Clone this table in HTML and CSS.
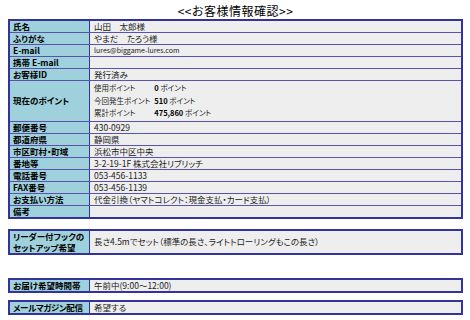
FILE: index.html
```html
<!DOCTYPE html>
<html lang="ja">
<head>
<meta charset="utf-8">
<title>お客様情報確認</title>
<link rel="stylesheet" href="styles.css">
</head>
<body>
<h1 class="title">&lt;&lt;お客様情報確認&gt;&gt;</h1>
<table class="info">
  <tr><th>氏名</th><td>山田　太郎様</td></tr>
  <tr><th>ふりがな</th><td>やまだ　たろう様</td></tr>
  <tr><th>E-mail</th><td class="small">lures@biggame-lures.com</td></tr>
  <tr><th>携帯 E-mail</th><td></td></tr>
  <tr><th>お客様ID</th><td>発行済み</td></tr>
  <tr><th>現在のポイント</th><td>
    <table class="points">
      <tr><td class="pl">使用ポイント</td><td><b>0</b> ポイント</td></tr>
      <tr><td class="pl">今回発生ポイント</td><td><b>510</b> ポイント</td></tr>
      <tr><td class="pl">累計ポイント</td><td><b>475,860</b> ポイント</td></tr>
    </table>
  </td></tr>
  <tr><th>郵便番号</th><td>430-0929</td></tr>
  <tr><th>都道府県</th><td>静岡県</td></tr>
  <tr><th>市区町村・町域</th><td>浜松市中区中央</td></tr>
  <tr><th>番地等</th><td>3-2-19-1F 株式会社リブリッチ</td></tr>
  <tr><th>電話番号</th><td>053-456-1133</td></tr>
  <tr><th>FAX番号</th><td>053-456-1139</td></tr>
  <tr><th>お支払い方法</th><td>代金引換（ヤマトコレクト：現金支払・カード支払）</td></tr>
  <tr><th>備考</th><td></td></tr>
</table>

<table class="info gap1">
  <tr class="two"><th>リーダー付フックの<br>セットアップ希望</th><td>長さ4.5mでセット（標準の長さ、ライトトローリングもこの長さ）</td></tr>
</table>

<table class="info gap2">
  <tr><th>お届け希望時間帯</th><td>午前中(9:00～12:00)</td></tr>
</table>

<table class="info gap3">
  <tr><th class="tight">メールマガジン配信</th><td>希望する</td></tr>
</table>
</body>
</html>
```
FILE: styles.css
```css
body {
  margin: 4px 7px 0 8px;
  background: #ffffff;
  color: #000000;
  font-family: "Noto Sans CJK JP", "DejaVu Sans", sans-serif;
  font-size: 8px;
  font-feature-settings: "palt";
}

.title {
  margin: 0 0 1px;
  text-align: center;
  font-size: 12px;
  line-height: 14px;
  font-weight: normal;
  letter-spacing: 0.5px;
}

.info {
  width: 100%;
  table-layout: fixed;
  border-collapse: collapse;
  border: 2px solid #333399;
}

.info > tbody > tr > th,
.info > tbody > tr > td {
  height: 11px;
  line-height: 11px;
  padding: 0 4px;
  border-top: 1px solid #5b52b0;
  border-bottom: 1px solid #5b52b0;
  vertical-align: middle;
  overflow: hidden;
}

.info > tbody > tr > th {
  width: 72px;
  padding-left: 3px;
  background: #9ed1dc;
  border-right: 1px solid #333399;
  text-align: left;
  font-size: 8.5px;
  font-weight: bold;
  white-space: nowrap;
}

.info > tbody > tr > th.tight {
  letter-spacing: -0.4px;
}

.info > tbody > tr > td {
  background: #eeeeee;
  color: #222222;
  font-size: 8.5px;
  white-space: nowrap;
}

.info > tbody > tr > td.small {
  font-size: 7px;
}

.points {
  border-collapse: collapse;
  margin: 1px 0;
  font-size: 7.5px;
}

.points td {
  padding: 0;
  height: 12.5px;
  line-height: 12.5px;
  white-space: nowrap;
}

.points .pl {
  width: 56px;
  padding-right: 4px;
}

.points b {
  font-weight: bold;
  color: #000000;
}

.info .two th,
.info .two td {
  height: 20px;
  line-height: 11px;
}

.gap1 { margin-top: 10px; }
.gap2 { margin-top: 23px; }
.gap3 { margin-top: 7px; }
```
